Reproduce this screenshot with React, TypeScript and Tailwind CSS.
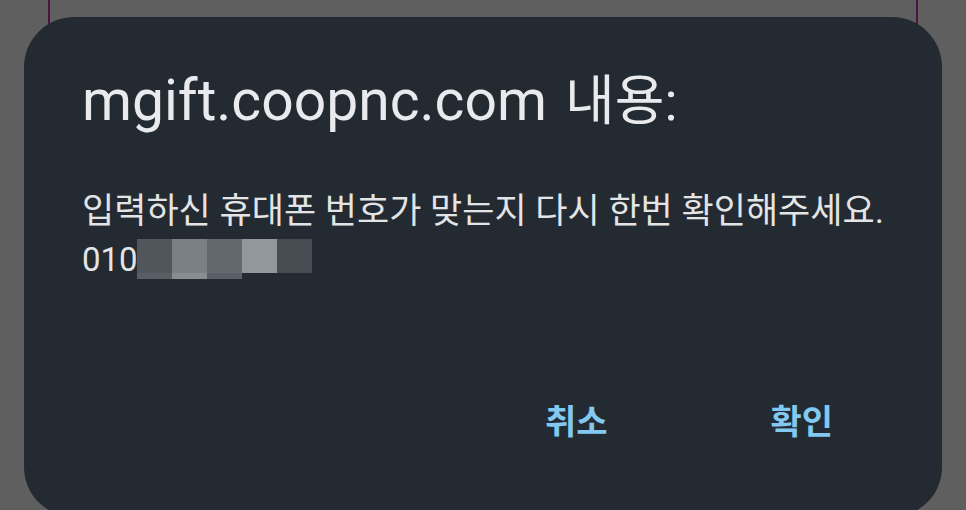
import React from 'react';

const pixelBlocks = [
  { top: 'bg-[#50565c]', bottom: 'bg-[#5a5f65]' },
  { top: 'bg-[#7a7f85]', bottom: 'bg-[#888d92]' },
  { top: 'bg-[#62686d]', bottom: 'bg-[#5a6066]' },
  { top: 'bg-[#92979c]', bottom: '' },
  { top: 'bg-[#474c52]', bottom: '' },
];

const App: React.FC = () => {
  return (
    <div
      className="w-[966px] h-[510px] overflow-hidden bg-[#5f5f5f] px-[48px]"
      style={{ fontFamily: 'Roboto, "Noto Sans CJK KR", sans-serif' }}
    >
      <div className="h-full border-x-2 border-[#4c1242] pt-[17px]">
        <div className="mx-[-26px] h-[500px] rounded-[50px] bg-[#232a31] pl-[58px] pr-[40px] pt-[55px] flex flex-col">
          <h1 className="text-[57px] leading-[57px] text-[#e8eaed] font-normal">
            mgift.coopnc.com <span className="ml-[4px] text-[54px]">내용:</span>
          </h1>

          <div className="mt-[58px] leading-[48px] text-[#e3e4e6]">
            <p className="text-[35px]">입력하신 휴대폰 번호가 맞는지 다시 한번 확인해주세요.</p>
            <div className="flex items-start text-[33px]">
              <span>010</span>
              <div className="flex mt-[3px] -ml-[1px]">
                {pixelBlocks.map((b, i) => (
                  <div key={i} className="flex flex-col w-[35px]">
                    <div className={`h-[34px] ${b.top}`} />
                    {b.bottom && <div className={`h-[6px] ${b.bottom}`} />}
                  </div>
                ))}
              </div>
            </div>
          </div>

          <div className="mt-auto mb-[69px] flex justify-end gap-[163px] pr-[69px] text-[34px] font-bold text-[#82c8f0]">
            <button>취소</button>
            <button>확인</button>
          </div>
        </div>
      </div>
    </div>
  );
};

export default App;
